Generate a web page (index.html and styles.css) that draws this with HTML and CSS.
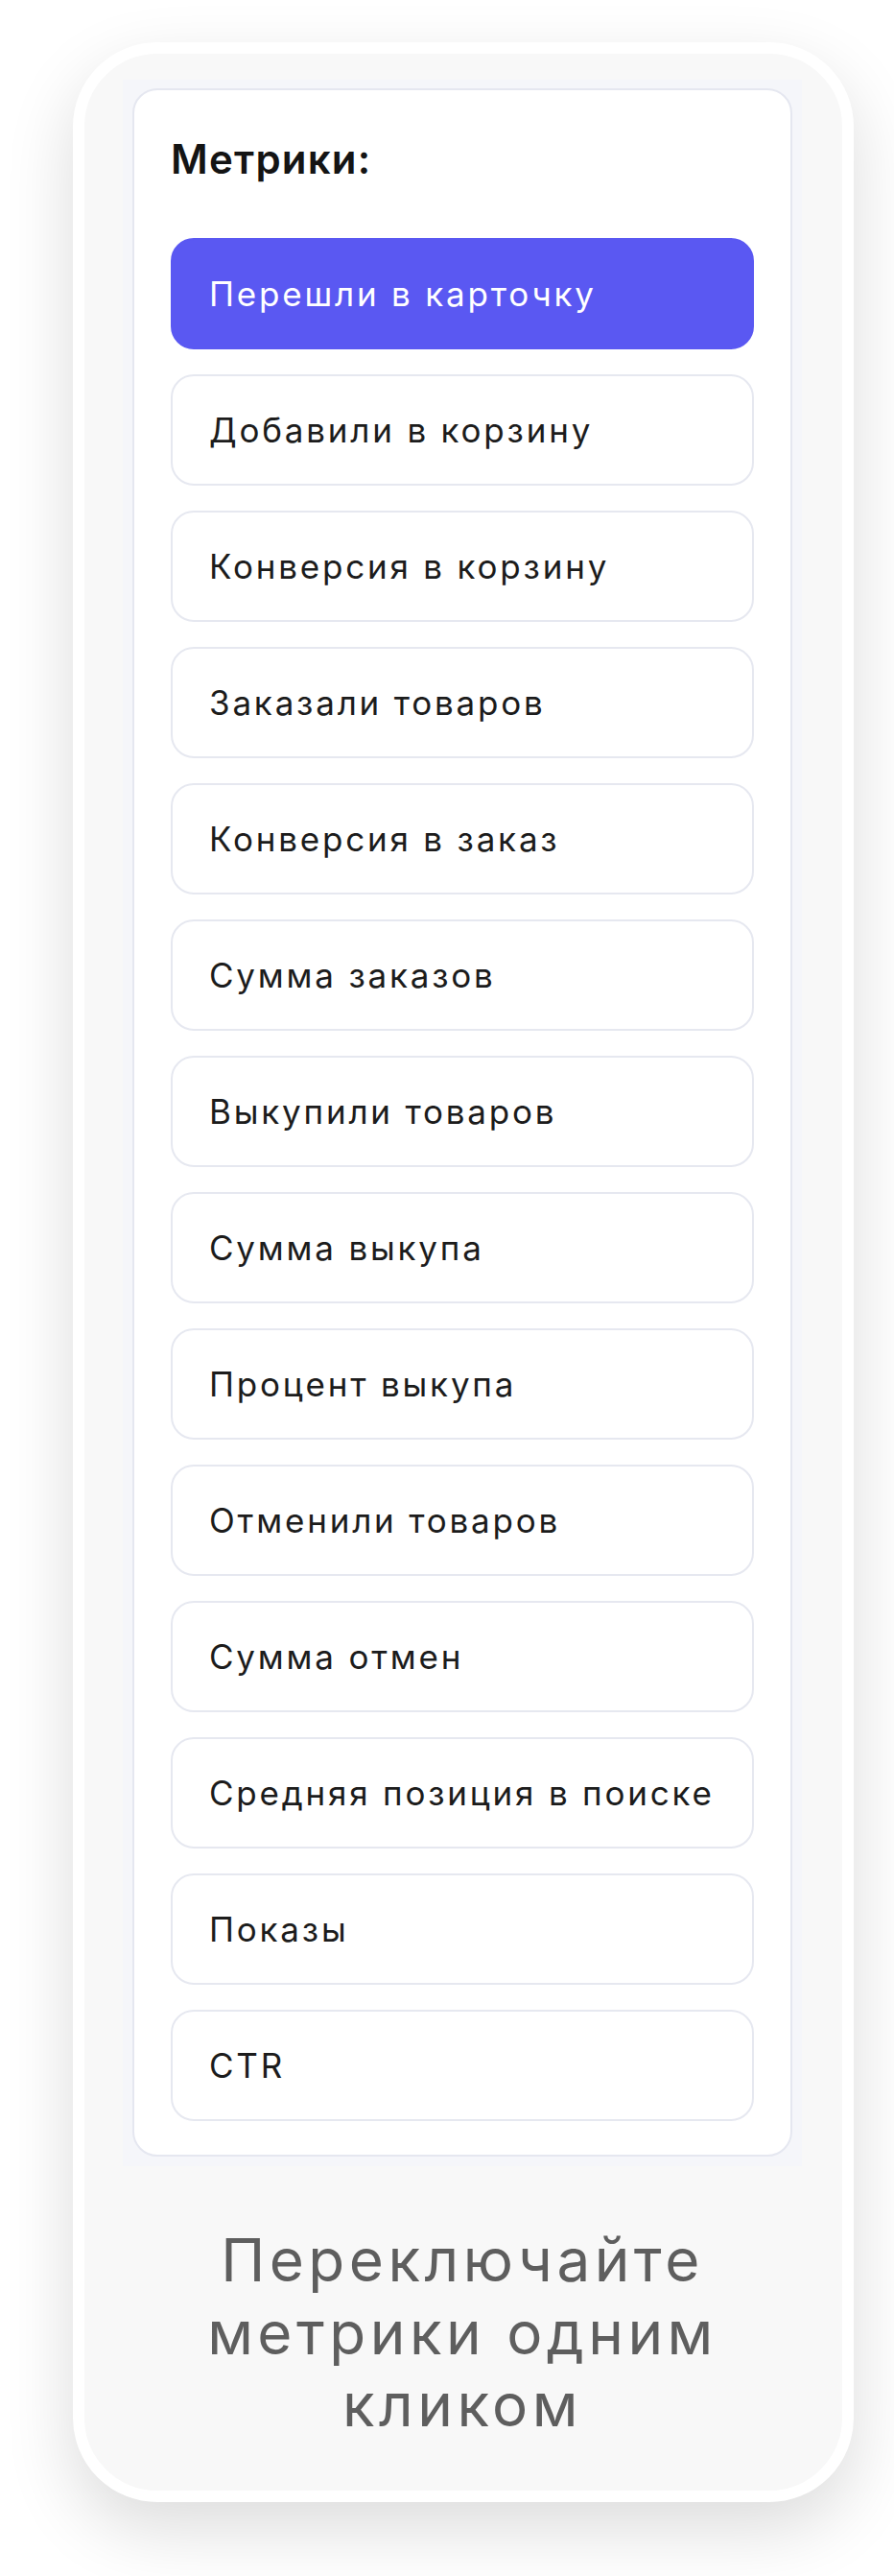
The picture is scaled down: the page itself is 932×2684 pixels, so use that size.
FILE: index.html
```html
<!DOCTYPE html>
<html lang="ru">
<head>
<meta charset="utf-8">
<title>Метрики</title>
<link rel="stylesheet" href="styles.css">
</head>
<body>
<div class="page">
  <div class="phone">
    <div class="panel">
      <div class="card">
        <h2 class="card-title">Метрики:</h2>
        <ul class="metrics">
          <li class="metric metric--active">Перешли в карточку</li>
          <li class="metric">Добавили в корзину</li>
          <li class="metric">Конверсия в корзину</li>
          <li class="metric">Заказали товаров</li>
          <li class="metric">Конверсия в заказ</li>
          <li class="metric">Сумма заказов</li>
          <li class="metric">Выкупили товаров</li>
          <li class="metric">Сумма выкупа</li>
          <li class="metric">Процент выкупа</li>
          <li class="metric">Отменили товаров</li>
          <li class="metric">Сумма отмен</li>
          <li class="metric">Средняя позиция в поиске</li>
          <li class="metric">Показы</li>
          <li class="metric">CTR</li>
        </ul>
      </div>
    </div>
    <p class="caption">Переключайте<br>метрики одним<br>кликом</p>
  </div>
</div>
</body>
</html>
```
FILE: styles.css
```css
* {
  box-sizing: border-box;
}

html, body {
  margin: 0;
  padding: 0;
  background: #ffffff;
}

body {
  font-family: Inter, "Noto Sans", sans-serif;
}

.page {
  width: 932px;
  height: 2684px;
  padding: 44px 0 0 76px;
}

.phone {
  width: 814px;
  height: 2563px;
  border: 12px solid #ffffff;
  border-radius: 88px;
  background: #f8f8f8;
  box-shadow: 0 28px 72px rgba(0, 0, 0, 0.14);
  padding: 27px 42px 0 40px;
}

.panel {
  background: #f5f6fa;
  padding: 9px 10px 10px 10px;
}

.card {
  background: #ffffff;
  border: 2px solid #e5e7f0;
  border-radius: 26px;
  padding: 46px 38px 35px 38px;
}

.card-title {
  margin: 0 0 57px 0;
  font-family: Inter, sans-serif;
  font-weight: 600;
  font-size: 42px;
  line-height: normal;
  letter-spacing: 1.2px;
  color: #141414;
}

.metrics {
  list-style: none;
  margin: 0;
  padding: 0;
  display: flex;
  flex-direction: column;
  gap: 26px;
}

.metric {
  height: 116px;
  border: 2px solid #e6e8f0;
  border-radius: 24px;
  background: #ffffff;
  padding-left: 38px;
  display: flex;
  align-items: center;
  font-family: Inter, sans-serif;
  font-size: 35px;
  letter-spacing: 2.8px;
  color: #1c1c1c;
  white-space: nowrap;
}

.metric--active {
  background: #5a58f2;
  border-color: #5a58f2;
  color: #ffffff;
}

.caption {
  margin: 60px 0 0 0;
  text-align: center;
  font-family: Inter, sans-serif;
  font-weight: 400;
  font-size: 62px;
  line-height: 75.5px;
  letter-spacing: 4.5px;
  color: #5e5e5e;
}
```
